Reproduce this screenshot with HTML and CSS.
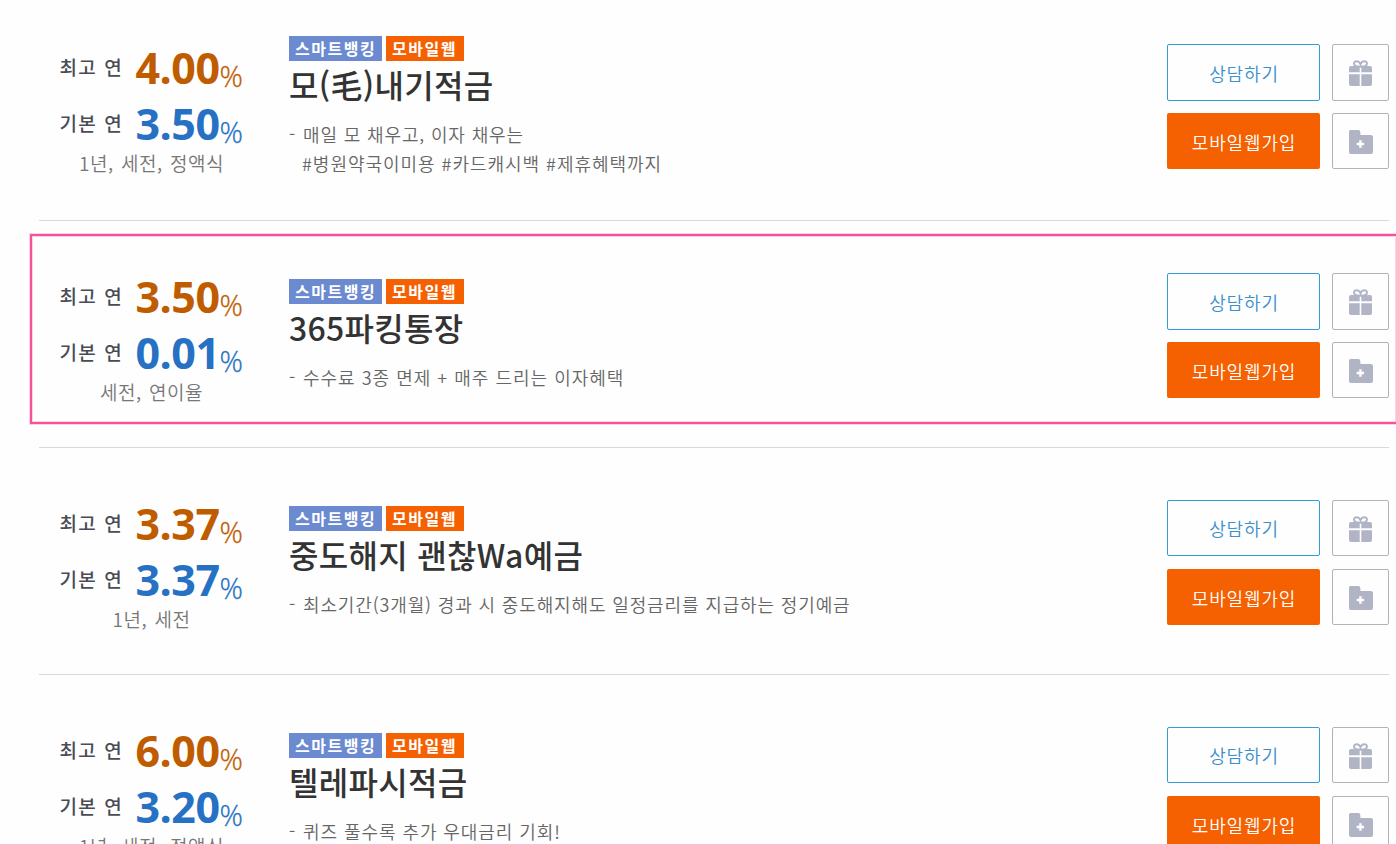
FILE: index.html
```html
<!DOCTYPE html>
<html lang="ko">
<head>
<meta charset="utf-8">
<title>예금상품</title>
<link rel="stylesheet" href="styles.css">
</head>
<body>
<svg class="sprite" aria-hidden="true">
  <symbol id="gift" viewBox="0 0 24 26">
    <path class="bow" d="M11.5 6.8C8 6.8 5 5.8 5 3.6 5 .4 10 .2 11.5 4.2 13 .2 18 .4 18 3.6 18 5.8 15 6.8 11.5 6.8"/>
    <path d="M2 6H10.7V12.3H0V8Q0 6 2 6ZM12.3 6H21Q23 6 23 8V12.3H12.3ZM0 14.2H10.7V26H2Q0 26 0 24ZM12.3 14.2H23V24Q23 26 21 26H12.3Z"/>
  </symbol>
  <symbol id="folder" viewBox="0 0 24 24">
    <path fill-rule="evenodd" d="M1.5 0H9.5Q11 0 11.2 1.5L11.5 5H22Q24 5 24 7V22Q24 24 22 24H2Q0 24 0 22V1.5Q0 0 1.5 0ZM10.2 10.3V12.8H7.7V15.2H10.2V17.7H12.6V15.2H15.1V12.8H12.6V10.3Z"/>
  </symbol>
</svg>
<main class="products">
  <article class="product first">
    <div class="rates">
      <div class="rate top"><span class="label">최고 연</span><strong>4.00</strong><span class="pct">%</span></div>
      <div class="rate base"><span class="label">기본 연</span><strong>3.50</strong><span class="pct">%</span></div>
      <p class="terms">1년, 세전, 정액식</p>
    </div>
    <div class="info">
      <div class="badges"><span class="badge smart">스마트뱅킹</span><span class="badge web">모바일웹</span></div>
      <h2>모(毛)내기적금</h2>
      <p class="desc"><span>매일 모 채우고, 이자 채우는</span><br><span class="tags">#병원약국이미용 #카드캐시백 #제휴혜택까지</span></p>
    </div>
    <div class="actions">
      <a class="btn consult">상담하기</a><a class="icon"><svg class="gift"><use href="#gift"/></svg></a>
      <a class="btn join">모바일웹가입</a><a class="icon"><svg class="folder"><use href="#folder"/></svg></a>
    </div>
  </article>
  <article class="product">
    <div class="rates">
      <div class="rate top"><span class="label">최고 연</span><strong>3.50</strong><span class="pct">%</span></div>
      <div class="rate base"><span class="label">기본 연</span><strong>0.01</strong><span class="pct">%</span></div>
      <p class="terms">세전, 연이율</p>
    </div>
    <div class="info">
      <div class="badges"><span class="badge smart">스마트뱅킹</span><span class="badge web">모바일웹</span></div>
      <h2>365파킹통장</h2>
      <p class="desc"><span class="parking">수수료 3종 면제 + 매주 드리는 이자혜택</span></p>
    </div>
    <div class="actions">
      <a class="btn consult">상담하기</a><a class="icon"><svg class="gift"><use href="#gift"/></svg></a>
      <a class="btn join">모바일웹가입</a><a class="icon"><svg class="folder"><use href="#folder"/></svg></a>
    </div>
    <div class="highlight"></div>
  </article>
  <article class="product late">
    <div class="rates">
      <div class="rate top"><span class="label">최고 연</span><strong>3.37</strong><span class="pct">%</span></div>
      <div class="rate base"><span class="label">기본 연</span><strong>3.37</strong><span class="pct">%</span></div>
      <p class="terms">1년, 세전</p>
    </div>
    <div class="info">
      <div class="badges"><span class="badge smart">스마트뱅킹</span><span class="badge web">모바일웹</span></div>
      <h2>중도해지 괜찮Wa예금</h2>
      <p class="desc"><span class="deposit">최소기간(3개월) 경과 시 중도해지해도 일정금리를 지급하는 정기예금</span></p>
    </div>
    <div class="actions">
      <a class="btn consult">상담하기</a><a class="icon"><svg class="gift"><use href="#gift"/></svg></a>
      <a class="btn join">모바일웹가입</a><a class="icon"><svg class="folder"><use href="#folder"/></svg></a>
    </div>
  </article>
  <article class="product late">
    <div class="rates">
      <div class="rate top"><span class="label">최고 연</span><strong>6.00</strong><span class="pct">%</span></div>
      <div class="rate base"><span class="label">기본 연</span><strong>3.20</strong><span class="pct">%</span></div>
      <p class="terms">1년, 세전, 정액식</p>
    </div>
    <div class="info">
      <div class="badges"><span class="badge smart">스마트뱅킹</span><span class="badge web">모바일웹</span></div>
      <h2>텔레파시적금</h2>
      <p class="desc"><span class="quiz">퀴즈 풀수록 추가 우대금리 기회!</span></p>
    </div>
    <div class="actions">
      <a class="btn consult">상담하기</a><a class="icon"><svg class="gift"><use href="#gift"/></svg></a>
      <a class="btn join">모바일웹가입</a><a class="icon"><svg class="folder"><use href="#folder"/></svg></a>
    </div>
  </article>
</main>
</body>
</html>
```
FILE: styles.css
```css
* { box-sizing: border-box; }
body {
  margin: 0;
  height: 844px;
  overflow: hidden;
  background: #fefefe;
  font-family: "Noto Sans CJK KR", sans-serif;
}
.sprite { display: none; }
h2, p { margin: 0; font-weight: 500; }
.products { width: 1350px; height: 844px; margin-left: 39px; }
.product {
  position: relative;
  display: grid;
  grid-template-columns: 250px 1fr 222px;
  height: 227px;
  border-bottom: 1px solid #d9d9d9;
}
.product.first { height: 221px; }

.rates { padding-top: 47px; white-space: nowrap; }
.first .rates { padding-top: 39px; }
.rate { display: flex; height: 56px; line-height: 56px; padding-left: 20.5px; }
.label { width: 76px; font-size: 19px; letter-spacing: 1.2px; word-spacing: .8px; color: #4a4c55; font-weight: 500; }
.rate strong {
  width: 84px;
  font: 700 43px/58px "Open Sans", sans-serif;
  letter-spacing: -.5px;
}
.pct { font: 300 29px/74px "Open Sans", sans-serif; -webkit-text-stroke: .3px currentColor; }
.top { color: #c05c00; }
.base { color: #2671c4; }
.terms {
  width: 225px;
  text-align: center;
  font-size: 19px;
  font-weight: 350;
  line-height: 24px;
  letter-spacing: .5px;
  word-spacing: 1.6px;
  color: #777;
}

.info { padding-top: 58px; white-space: nowrap; }
.first .info { padding-top: 36px; }
.badges { display: flex; gap: 4px; height: 25px; }
.badge {
  height: 25px;
  padding-left: 6px;
  font-size: 16px;
  line-height: 25px;
  font-weight: 700;
  letter-spacing: 1.5px;
  color: #fff;
}
.smart { width: 93px; background: #6b8ad0; }
.web { width: 78px; background: #f56000; }
h2 { font-size: 32px; line-height: 46px; letter-spacing: .3px; color: #333; }
.desc {
  position: relative;
  margin-top: 13px;
  padding-left: 14px;
  font-size: 18px;
  font-weight: 350;
  line-height: 29px;
  letter-spacing: .86px;
  color: #666;
}
.desc::before { content: "-"; position: absolute; left: 0; top: -1px; }
.tags { margin-left: -1px; letter-spacing: .97px; }
.parking { letter-spacing: 1px; }
.quiz { letter-spacing: .93px; }

.actions {
  display: grid;
  grid-template: 57px 56px / 153px 57px;
  gap: 12px;
  padding-top: 52px;
}
.first .actions { padding-top: 44px; }
.late .actions { grid-template-rows: 56px 56px; row-gap: 13px; }
.btn, .icon { display: flex; justify-content: center; align-items: center; border-radius: 2px; }
.btn { font-size: 18px; font-weight: 350; letter-spacing: .85px; padding: 2px 0 0 1px; }
.consult { border: 1px solid #329dd7; color: #3c90cc; padding-top: 0; }
.join { background: #f56000; color: #fff; }
.icon { border: 1px solid #b3b3b3; fill: #b1b4c5; }
.gift { width: 24px; height: 26px; margin-top: 1px; }
.folder { width: 24px; height: 24px; margin-top: 1px; }
.bow { fill: none; stroke: #b1b4c5; stroke-width: 2; }
.highlight {
  position: absolute;
  left: -9px;
  top: 13px;
  width: 1368px;
  height: 190px;
  border: 2px solid #f5529a;
  box-shadow: 0 0 0 1px #fbd3e4, inset 0 0 0 1px #fbd3e4;
  pointer-events: none;
}
```
